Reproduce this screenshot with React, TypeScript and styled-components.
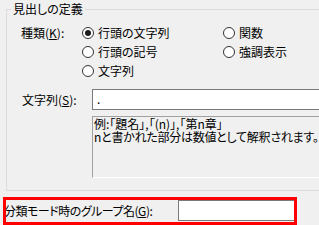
import React from "react";
import styled, { createGlobalStyle } from "styled-components";

const GlobalStyle = createGlobalStyle`
  html, body { margin: 0; padding: 0; background: #f0f0f0; }
  body {
    font-family: "Noto Sans CJK JP", "Noto Sans", sans-serif;
    font-size: 12px;
    color: #000;
    font-feature-settings: "palt";
  }
`;

const Page = styled.div`
  width: 319px;
  height: 225px;
  overflow: hidden;
  padding-top: 2px;
  box-sizing: border-box;
`;

const Group = styled.fieldset`
  margin: 0 0 0 6px;
  padding: 0;
  border: 1px solid #dcdcdc;
  border-right: none;
  width: 360px;
  min-width: 0;
  box-sizing: border-box;
`;

const Legend = styled.legend`
  margin-left: 4px;
  padding: 0 2px;
  line-height: 14px;
  font-size: 12px;
`;

const GroupBody = styled.div`
  padding: 7px 0 12px 14px;
`;

const KindRow = styled.div`
  display: grid;
  grid-template-columns: 61px 1fr;
  align-items: start;
`;

const FieldLabel = styled.span`
  line-height: 19px;
  white-space: nowrap;
`;

const RadioGrid = styled.div`
  display: grid;
  grid-template-columns: 141px auto;
  grid-auto-rows: 19px;
`;

const RadioItem = styled.label`
  display: flex;
  align-items: center;
  gap: 4px;
  white-space: nowrap;
  line-height: 19px;
`;

const Circle = styled.span<{ $checked?: boolean }>`
  width: 12px;
  height: 12px;
  border-radius: 50%;
  border: 1px solid #333;
  background: #fff;
  box-sizing: border-box;
  display: flex;
  align-items: center;
  justify-content: center;
  flex: none;
  &::after {
    content: "";
    display: ${(p) => (p.$checked ? "block" : "none")};
    width: 6px;
    height: 6px;
    border-radius: 50%;
    background: #1a1a1a;
  }
`;

const StringRow = styled.div`
  display: flex;
  align-items: center;
  margin-top: 9px;
`;

const StringLabel = styled.span`
  width: 71px;
  flex: none;
  padding-left: 1px;
  box-sizing: border-box;
  white-space: nowrap;
`;

const Edit = styled.div<{ $width?: string }>`
  height: 21px;
  box-sizing: border-box;
  border: 1px solid #7a7a7a;
  background: #fff;
  flex: ${(p) => (p.$width ? "none" : "1")};
  width: ${(p) => p.$width || "auto"};
  padding: 0 4px;
  line-height: 18px;
`;

const Memo = styled.div`
  margin: 6px 0 0 71px;
  height: 62px;
  box-sizing: border-box;
  border-top: 1px solid #a0a0a0;
  border-left: 1px solid #a0a0a0;
  border-right: 1px solid #fff;
  border-bottom: 1px solid #fff;
  padding: 0 1px;
`;

const MemoLine = styled.div<{ $spacing?: number }>`
  line-height: 13px;
  height: 13px;
  white-space: nowrap;
  letter-spacing: ${(p) => p.$spacing ?? 0}px;
`;

const BottomRow = styled.div`
  position: relative;
  margin-top: 9px;
  display: grid;
  grid-template-columns: 174px 118px;
  align-items: center;
  padding-left: 4px;
  height: 21px;
`;

const BottomLabel = styled.span`
  white-space: nowrap;
  letter-spacing: -0.5px;
`;

const Highlight = styled.div`
  position: absolute;
  left: 3px;
  top: -3px;
  width: 294px;
  height: 28px;
  border: 3px solid #ff0000;
  box-sizing: border-box;
  pointer-events: none;
`;

const U = styled.span`
  text-decoration: underline;
`;

const Radio = ({ checked, children }: { checked?: boolean; children: React.ReactNode }) => (
  <RadioItem>
    <Circle $checked={checked} />
    <span>{children}</span>
  </RadioItem>
);

export default function App() {
  return (
    <>
      <GlobalStyle />
      <Page>
        <Group>
          <Legend>見出しの定義</Legend>
          <GroupBody>
            <KindRow>
              <FieldLabel>
                種類(<U>K</U>):
              </FieldLabel>
              <RadioGrid>
                <Radio checked>行頭の文字列</Radio>
                <Radio>関数</Radio>
                <Radio>行頭の記号</Radio>
                <Radio>強調表示</Radio>
                <Radio>文字列</Radio>
              </RadioGrid>
            </KindRow>
            <StringRow>
              <StringLabel>
                文字列(<U>S</U>):
              </StringLabel>
              <Edit>.</Edit>
            </StringRow>
            <Memo>
              <MemoLine>例:「題名」,「(n)」,「第n章」</MemoLine>
              <MemoLine $spacing={-0.25}>nと書かれた部分は数値として解釈されます。</MemoLine>
            </Memo>
          </GroupBody>
        </Group>
        <BottomRow>
          <BottomLabel>
            分類モード時のグループ名(<U>G</U>):
          </BottomLabel>
          <Edit $width="118px" />
          <Highlight />
        </BottomRow>
      </Page>
    </>
  );
}
